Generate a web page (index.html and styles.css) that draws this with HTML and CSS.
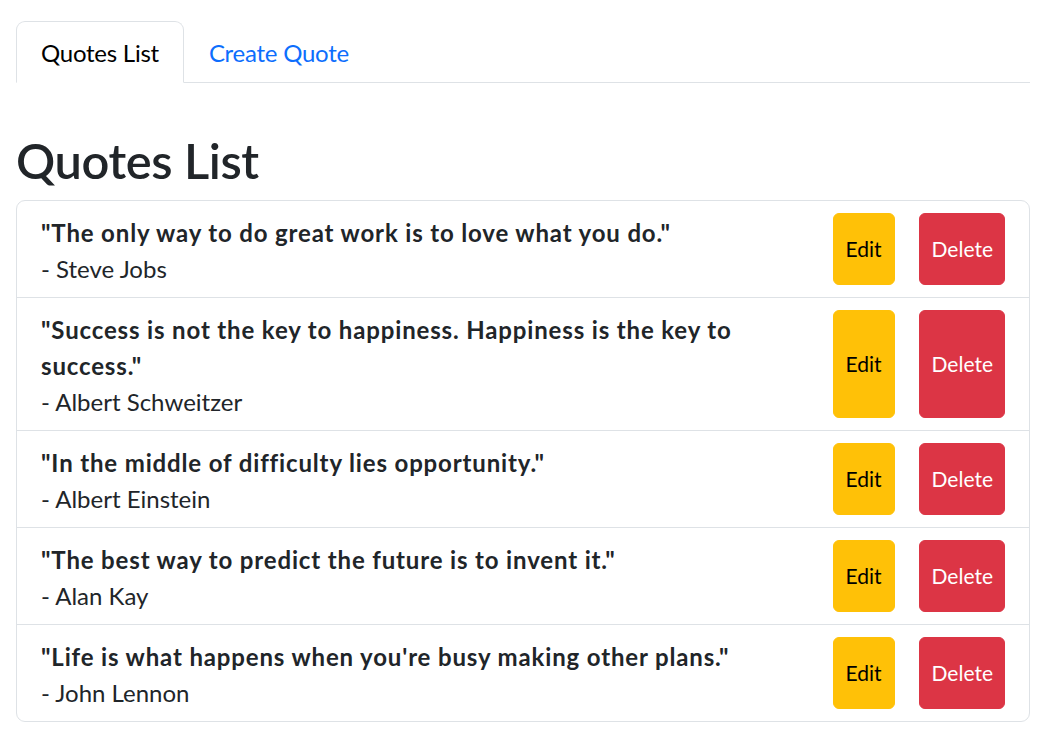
FILE: index.html
```html
<!DOCTYPE html>
<html lang="en">
<head>
<meta charset="utf-8">
<title>Quotes</title>
<link rel="stylesheet" href="styles.css">
</head>
<body>
<div class="page">
  <ul class="tabs">
    <li><a class="tab active" href="#">Quotes List</a></li>
    <li><a class="tab" href="#">Create Quote</a></li>
  </ul>
  <h1 class="title">Quotes List</h1>
  <ul class="list">
    <li class="item">
      <div class="quote">
        <div class="text">"The only way to do great work is to love what you do."</div>
        <div class="author">- Steve Jobs</div>
      </div>
      <div class="actions"><button class="btn edit">Edit</button><button class="btn delete">Delete</button></div>
    </li>
    <li class="item">
      <div class="quote">
        <div class="text">"Success is not the key to happiness. Happiness is the key to success."</div>
        <div class="author">- Albert Schweitzer</div>
      </div>
      <div class="actions"><button class="btn edit">Edit</button><button class="btn delete">Delete</button></div>
    </li>
    <li class="item">
      <div class="quote">
        <div class="text">"In the middle of difficulty lies opportunity."</div>
        <div class="author">- Albert Einstein</div>
      </div>
      <div class="actions"><button class="btn edit">Edit</button><button class="btn delete">Delete</button></div>
    </li>
    <li class="item">
      <div class="quote">
        <div class="text">"The best way to predict the future is to invent it."</div>
        <div class="author">- Alan Kay</div>
      </div>
      <div class="actions"><button class="btn edit">Edit</button><button class="btn delete">Delete</button></div>
    </li>
    <li class="item">
      <div class="quote">
        <div class="text">"Life is what happens when you're busy making other plans."</div>
        <div class="author">- John Lennon</div>
      </div>
      <div class="actions"><button class="btn edit">Edit</button><button class="btn delete">Delete</button></div>
    </li>
  </ul>
</div>
</body>
</html>
```
FILE: styles.css
```css
html, body {
  margin: 0;
  padding: 0;
  background: #fff;
}
body {
  font-family: "Lato", "Liberation Sans", sans-serif;
  font-size: 24px;
  line-height: 36px;
  color: #212529;
}
.page {
  padding: 21px 26px 0 16px;
}
.tabs {
  list-style: none;
  margin: 0;
  padding: 0;
  display: flex;
  border-bottom: 1px solid #dee2e6;
}
.tabs li {
  margin-bottom: -1px;
}
.tab {
  display: block;
  padding: 13px 24px 11px;
  border: 1px solid transparent;
  border-radius: 9px 9px 0 0;
  color: #0d6efd;
  text-decoration: none;
  letter-spacing: -0.25px;
}
.tab.active {
  color: #000;
  border-color: #dee2e6 #dee2e6 #fff;
  background: #fff;
}
.title {
  margin: 46px 0 12px;
  padding-top: 2px;
  margin-bottom: 10px;
  font-size: 48.8px;
  line-height: 58.6px;
  font-weight: 600;
  letter-spacing: -0.4px;
  color: #212529;
}
.list {
  list-style: none;
  margin: 0;
  padding: 0;
  border: 1px solid #dee2e6;
  border-radius: 9px;
}
.item {
  display: flex;
  justify-content: space-between;
  padding: 12px 24px;
}
.item + .item {
  border-top: 1px solid #dee2e6;
}
.quote {
  padding-top: 2px;
  margin-bottom: -2px;
}
.text {
  font-weight: 700;
  letter-spacing: 0.85px;
}
.actions {
  display: flex;
  flex-shrink: 0;
}
.btn {
  display: flex;
  align-items: center;
  margin-left: 24px;
  padding: 6px 12px;
  border: 1px solid transparent;
  border-radius: 6px;
  font-family: inherit;
  font-size: 21px;
  line-height: 31.5px;
  cursor: pointer;
}
.btn.edit {
  background: #ffc107;
  border-color: #ffc107;
  color: #000;
}
.btn.delete {
  background: #dc3545;
  border-color: #dc3545;
  color: #fff;
  padding-right: 11px;
}
```
